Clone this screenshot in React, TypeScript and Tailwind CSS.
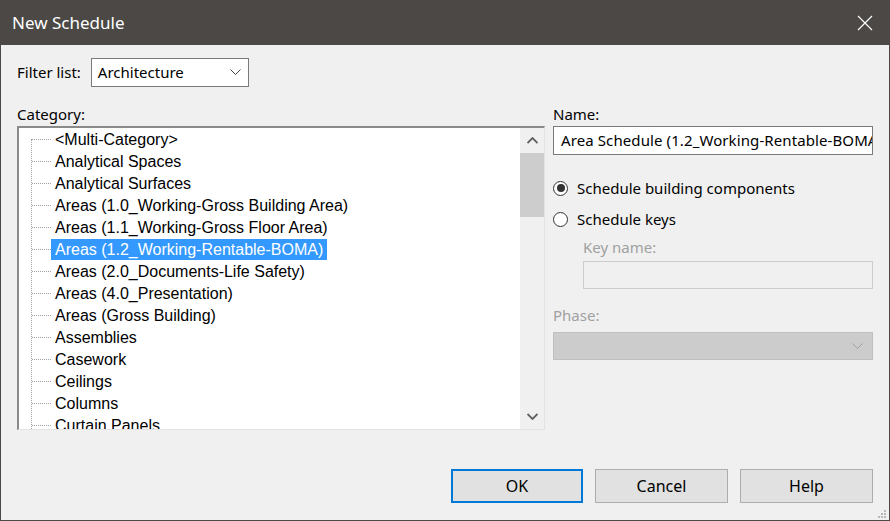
import React from "react";

const categories = [
  "<Multi-Category>",
  "Analytical Spaces",
  "Analytical Surfaces",
  "Areas (1.0_Working-Gross Building Area)",
  "Areas (1.1_Working-Gross Floor Area)",
  "Areas (1.2_Working-Rentable-BOMA)",
  "Areas (2.0_Documents-Life Safety)",
  "Areas (4.0_Presentation)",
  "Areas (Gross Building)",
  "Assemblies",
  "Casework",
  "Ceilings",
  "Columns",
  "Curtain Panels",
];

const ui = { fontFamily: '"Noto Sans", "Open Sans", sans-serif' };
const list = { fontFamily: '"Liberation Sans", Arial, sans-serif' };

function Chevron({ color = "#444" }: { color?: string }) {
  return (
    <svg width="11" height="7" viewBox="0 0 11 7" fill="none">
      <path d="M0.5 0.5 L5.5 5.5 L10.5 0.5" stroke={color} strokeWidth="1" />
    </svg>
  );
}

function Radio({ checked, label }: { checked?: boolean; label: string }) {
  return (
    <div className="flex items-center h-[22px]">
      <span className="w-[15px] h-[15px] rounded-full border border-[#333] bg-white flex items-center justify-center">
        {checked && <span className="w-[8px] h-[8px] rounded-full bg-[#333]" />}
      </span>
      <span className="ml-[9px] text-[15px] text-black leading-none">{label}</span>
    </div>
  );
}

export default function App() {
  const selected = 5;

  return (
    <div
      className="w-[890px] h-[521px] bg-[#f0f0f0] border border-[#4b4845] flex flex-col overflow-hidden"
      style={ui}
    >
      {/* Title bar */}
      <div className="h-[44px] shrink-0 bg-[#4b4845] flex items-center justify-between pl-[11px] pr-[16px]">
        <span className="text-white text-[17px]">New Schedule</span>
        <svg width="16" height="16" viewBox="0 0 16 16">
          <path d="M1 1 L15 15 M15 1 L1 15" stroke="#fff" strokeWidth="1.2" />
        </svg>
      </div>

      <div className="flex-1 flex flex-col px-[16px] relative">
        {/* Filter list */}
        <div className="flex items-center mt-[13px] h-[29px]">
          <span className="text-[15px] text-black">Filter list:</span>
          <div className="ml-[10px] w-[158px] h-[29px] bg-white border border-[#7a7a7a] flex items-center justify-between pl-[6px] pr-[7px]">
            <span className="text-[15px] text-black">Architecture</span>
            <Chevron />
          </div>
        </div>

        <div className="flex mt-[16px] gap-[8px]">
          {/* Category */}
          <div className="w-[529px] flex flex-col">
            <span className="text-[15px] text-black h-[22px] leading-[22px]">Category:</span>
            <div className="mt-[1px] h-[304px] flex bg-white border-t-2 border-l-2 border-t-[#8a8a8a] border-l-[#8a8a8a] border-b border-r border-b-[#e3e3e3] border-r-[#e3e3e3] overflow-hidden">
              <div className="flex-1 relative overflow-hidden" style={list}>
                <div className="absolute left-[12px] top-[11px] bottom-0 border-l border-dotted border-[#a0a0a0]" />
                {categories.map((c, i) => (
                  <div key={c} className="flex items-center h-[22px]">
                    <div className="ml-[13px] w-[19px] border-t border-dotted border-[#a0a0a0]" />
                    <span
                      className={
                        "px-[4px] h-[21px] leading-[21px] text-[16px] whitespace-nowrap " +
                        (i === selected ? "bg-[#3399ff] text-white" : "text-black")
                      }
                    >
                      {c}
                    </span>
                  </div>
                ))}
              </div>
              {/* Scrollbar */}
              <div className="w-[24px] bg-[#f0f0f0] flex flex-col">
                <div className="h-[25px] flex items-center justify-center">
                  <svg width="11" height="7" viewBox="0 0 11 7">
                    <path d="M0.5 6 L5.5 1 L10.5 6" stroke="#606060" strokeWidth="1.8" fill="none" />
                  </svg>
                </div>
                <div className="h-[64px] bg-[#cdcdcd]" />
                <div className="flex-1" />
                <div className="h-[25px] flex items-center justify-center">
                  <svg width="11" height="7" viewBox="0 0 11 7">
                    <path d="M0.5 1 L5.5 6 L10.5 1" stroke="#606060" strokeWidth="1.8" fill="none" />
                  </svg>
                </div>
              </div>
            </div>
          </div>

          {/* Right side */}
          <div className="w-[320px] flex flex-col">
            <span className="text-[15px] text-black h-[22px] leading-[22px]">Name:</span>
            <div className="mt-[1px] h-[29px] bg-white border border-[#7a7a7a] flex items-center pl-[7px] overflow-hidden">
              <span className="text-[15px] text-black whitespace-nowrap tracking-[0.1px]">
                Area Schedule (1.2_Working-Rentable-BOMA)
              </span>
            </div>
            <div className="mt-[22px] flex flex-col gap-[9px]">
              <Radio checked label="Schedule building components" />
              <Radio label="Schedule keys" />
            </div>
            <div className="ml-[30px] mt-[6px] flex flex-col">
              <span className="text-[15px] text-[#a0a0a0] h-[22px] leading-[22px]">Key name:</span>
              <div className="mt-[3px] h-[28px] border border-[#cccccc] bg-[#f0f0f0]" />
            </div>
            <span className="mt-[15px] text-[15px] text-[#a0a0a0] h-[22px] leading-[22px]">Phase:</span>
            <div className="mt-[6px] h-[28px] bg-[#cccccc] border border-[#bfbfbf] flex items-center justify-end pr-[9px]">
              <Chevron color="#a0a0a0" />
            </div>
          </div>
        </div>

        {/* Buttons */}
        <div className="flex justify-end gap-[12px] mt-[39px]">
          <button className="w-[132px] h-[34px] bg-[#e1e1e1] border-2 border-[#0078d7] text-[16px] text-black">
            OK
          </button>
          <button className="w-[133px] h-[34px] bg-[#e1e1e1] border border-[#adadad] text-[16px] text-black">
            Cancel
          </button>
          <button className="w-[133px] h-[34px] bg-[#e1e1e1] border border-[#adadad] text-[16px] text-black">
            Help
          </button>
        </div>

        {/* Resize grip */}
        <div className="absolute right-[3px] bottom-[2px] grid grid-cols-3 gap-[1px]">
          <span className="w-[2px] h-[2px]" />
          <span className="w-[2px] h-[2px]" />
          <span className="w-[2px] h-[2px] bg-[#b8b8b8]" />
          <span className="w-[2px] h-[2px]" />
          <span className="w-[2px] h-[2px] bg-[#b8b8b8]" />
          <span className="w-[2px] h-[2px] bg-[#b8b8b8]" />
          <span className="w-[2px] h-[2px] bg-[#b8b8b8]" />
          <span className="w-[2px] h-[2px] bg-[#b8b8b8]" />
          <span className="w-[2px] h-[2px] bg-[#b8b8b8]" />
        </div>
      </div>
    </div>
  );
}
